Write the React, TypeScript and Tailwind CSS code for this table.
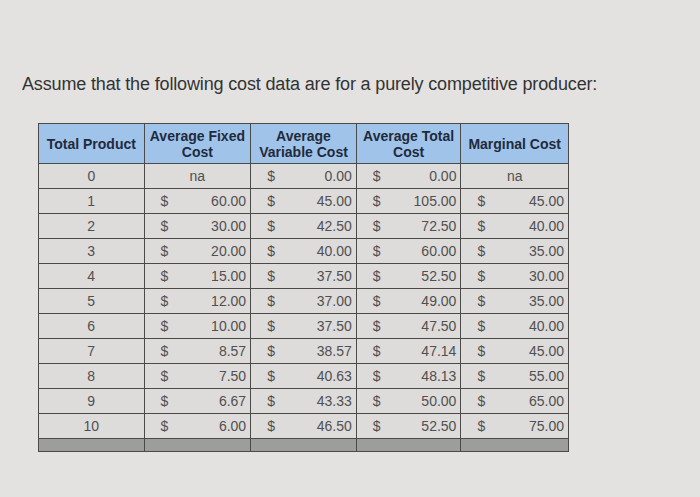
const rows: [string, string | null, string, string, string | null][] = [
  ["0", null, "0.00", "0.00", null],
  ["1", "60.00", "45.00", "105.00", "45.00"],
  ["2", "30.00", "42.50", "72.50", "40.00"],
  ["3", "20.00", "40.00", "60.00", "35.00"],
  ["4", "15.00", "37.50", "52.50", "30.00"],
  ["5", "12.00", "37.00", "49.00", "35.00"],
  ["6", "10.00", "37.50", "47.50", "40.00"],
  ["7", "8.57", "38.57", "47.14", "45.00"],
  ["8", "7.50", "40.63", "48.13", "55.00"],
  ["9", "6.67", "43.33", "50.00", "65.00"],
  ["10", "6.00", "46.50", "52.50", "75.00"],
];

const cols = ["w-[106px]", "w-[107px]", "w-[106px]", "w-[105px]", "w-[107px]"];

function Money({ v, w }: { v: string | null; w: string }) {
  return (
    <div className={`${w} border-r border-[#4a4a4a] last:border-r-0 flex items-center ${v ? "justify-between pl-4 pr-1" : "justify-center"}`}>
      {v ? (
        <>
          <span>$</span>
          <span>{v}</span>
        </>
      ) : (
        <span>na</span>
      )}
    </div>
  );
}

export default function App() {
  return (
    <div className="w-[700px] h-[497px] bg-[#e4e2e1] font-['Liberation_Sans',Arial,sans-serif] overflow-hidden">
      <p className="pt-[73px] pl-[22px] text-[18px] leading-[22px] text-[#333] tracking-[-0.15px]">
        Assume that the following cost data are for a purely competitive producer:
      </p>

      <div className="ml-[38px] mt-[28px] w-[531px] border border-[#4a4a4a]">
        <div className="flex h-[40px] bg-[#9fc3e9] text-[#1f2b3c] font-bold text-[14px] leading-[16px] text-center border-b border-[#4a4a4a]">
          <div className={`${cols[0]} border-r border-[#4a4a4a] flex items-center justify-center`}>Total Product</div>
          <div className={`${cols[1]} border-r border-[#4a4a4a] flex items-center justify-center`}>Average Fixed<br />Cost</div>
          <div className={`${cols[2]} border-r border-[#4a4a4a] flex items-center justify-center`}>Average<br />Variable Cost</div>
          <div className={`${cols[3]} border-r border-[#4a4a4a] flex items-center justify-center`}>Average Total<br />Cost</div>
          <div className={`${cols[4]} flex items-center justify-center`}>Marginal Cost</div>
        </div>

        {rows.map((r) => (
          <div key={r[0]} className="flex h-[25px] bg-[#dedbdb] text-[14px] text-[#505050] border-b border-[#4a4a4a]">
            <div className={`${cols[0]} border-r border-[#4a4a4a] flex items-center justify-center`}>{r[0]}</div>
            <Money v={r[1]} w={cols[1]} />
            <Money v={r[2]} w={cols[2]} />
            <Money v={r[3]} w={cols[3]} />
            <Money v={r[4]} w={cols[4]} />
          </div>
        ))}

        <div className="flex h-[12px] bg-[#9d9d9b]">
          {cols.map((c, i) => (
            <div key={i} className={`${c} border-r border-[#4a4a4a] last:border-r-0`} />
          ))}
        </div>
      </div>
    </div>
  );
}
